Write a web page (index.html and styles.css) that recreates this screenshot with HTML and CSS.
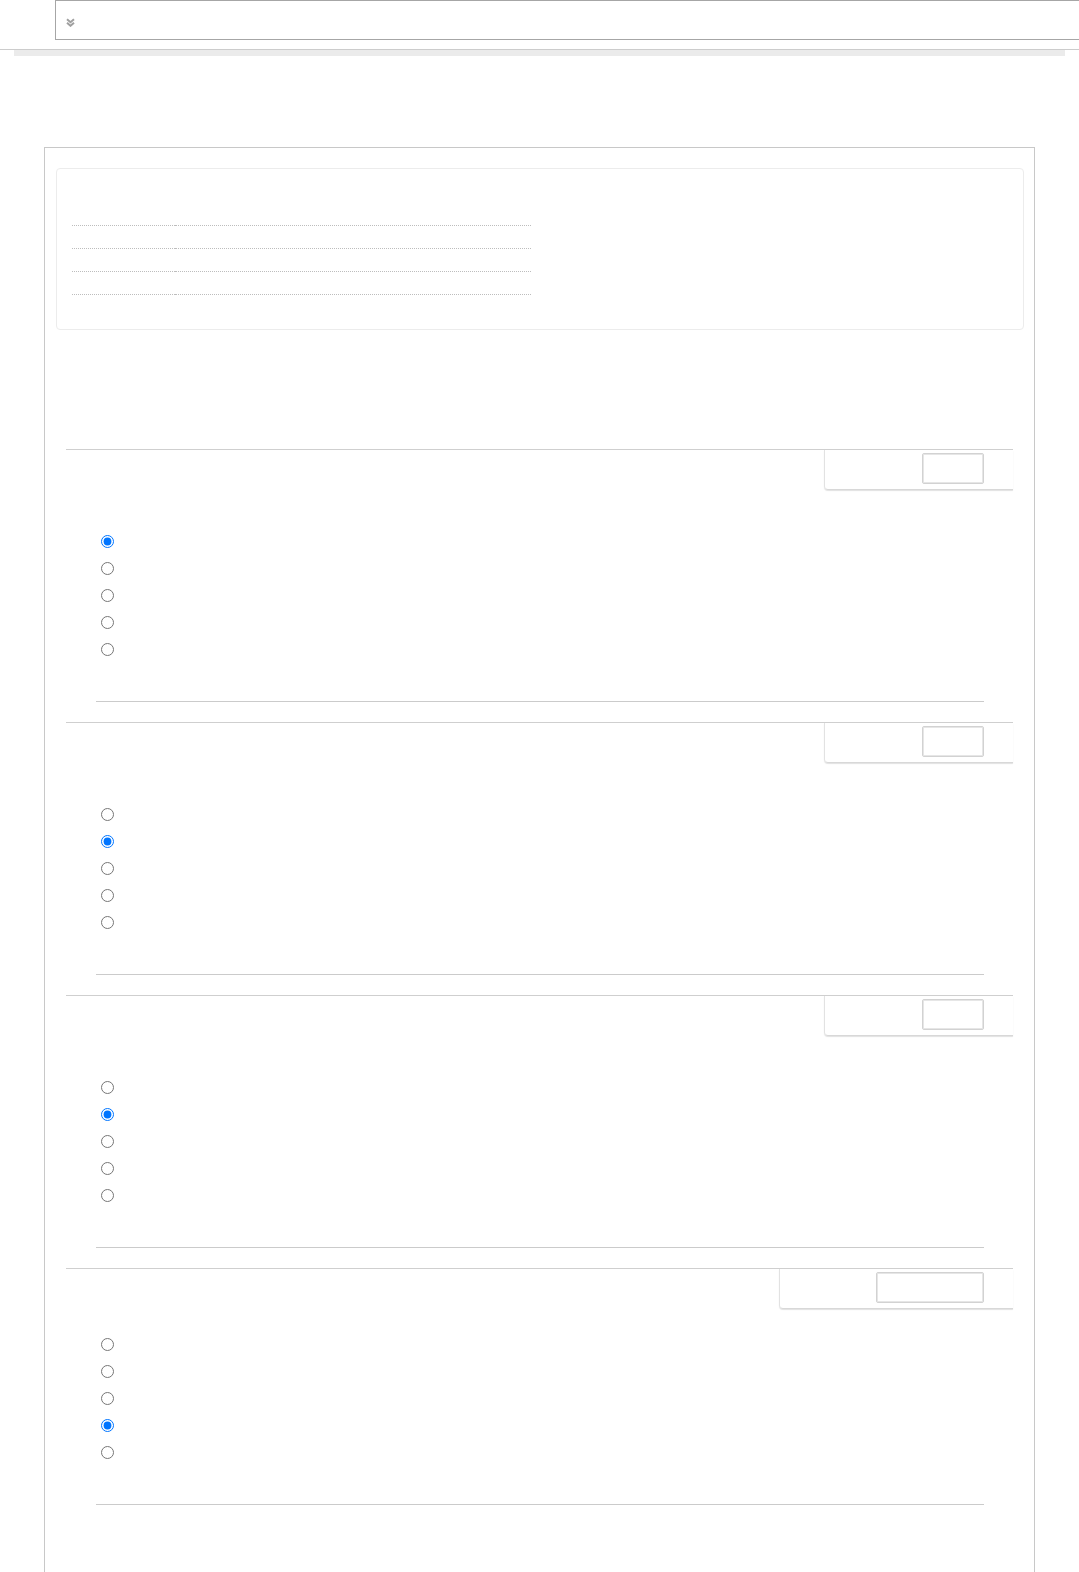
FILE: index.html
```html
<!DOCTYPE html>
<html lang="en">
<head>
    <meta charset="UTF-8">
    <meta name="viewport" content="width=device-width, initial-scale=1.0">
    <title>Quiz review</title>
    <link rel="stylesheet" href="styles.css">
</head>
<body>
    <header class="topbar">
        <div class="drawer">
            <svg class="drawer-icon" width="9" height="9" viewBox="0 0 9 9">
                <path d="M1 1.2l3.5 3 3.5-3M1 4.8l3.5 3 3.5-3" fill="none" stroke="#a0a0a0" stroke-width="2"/>
            </svg>
        </div>
    </header>
    <hr class="rule">
    <div class="progress"></div>

    <div class="page">
        <div class="summary">
            <div class="summary-table">
                <div class="row"><div class="cell label"></div><div class="cell value"></div></div>
                <div class="row"><div class="cell label"></div><div class="cell value"></div></div>
                <div class="row"><div class="cell label"></div><div class="cell value"></div></div>
                <div class="row"><div class="cell label"></div><div class="cell value"></div></div>
            </div>
        </div>

        <div class="questions">
            <div class="que">
                <div class="que-head">
                    <div class="grade"><input class="mark" type="text"></div>
                </div>
                <div class="answers">
                    <label class="opt"><input type="radio" name="q1" checked></label>
                    <label class="opt"><input type="radio" name="q1"></label>
                    <label class="opt"><input type="radio" name="q1"></label>
                    <label class="opt"><input type="radio" name="q1"></label>
                    <label class="opt"><input type="radio" name="q1"></label>
                </div>
                <hr class="que-end">
            </div>

            <div class="que">
                <div class="que-head">
                    <div class="grade"><input class="mark" type="text"></div>
                </div>
                <div class="answers">
                    <label class="opt"><input type="radio" name="q2"></label>
                    <label class="opt"><input type="radio" name="q2" checked></label>
                    <label class="opt"><input type="radio" name="q2"></label>
                    <label class="opt"><input type="radio" name="q2"></label>
                    <label class="opt"><input type="radio" name="q2"></label>
                </div>
                <hr class="que-end">
            </div>

            <div class="que">
                <div class="que-head">
                    <div class="grade"><input class="mark" type="text"></div>
                </div>
                <div class="answers">
                    <label class="opt"><input type="radio" name="q3"></label>
                    <label class="opt"><input type="radio" name="q3" checked></label>
                    <label class="opt"><input type="radio" name="q3"></label>
                    <label class="opt"><input type="radio" name="q3"></label>
                    <label class="opt"><input type="radio" name="q3"></label>
                </div>
                <hr class="que-end">
            </div>

            <div class="que que-short">
                <div class="que-head">
                    <div class="grade grade-wide"><input class="mark mark-wide" type="text"></div>
                </div>
                <div class="answers">
                    <label class="opt"><input type="radio" name="q4"></label>
                    <label class="opt"><input type="radio" name="q4"></label>
                    <label class="opt"><input type="radio" name="q4"></label>
                    <label class="opt"><input type="radio" name="q4" checked></label>
                    <label class="opt"><input type="radio" name="q4"></label>
                </div>
                <hr class="que-end">
            </div>
        </div>
    </div>
</body>
</html>
```

FILE: styles.css
```css
body {
    margin: 0;
    font-family: "Liberation Sans", Arial, sans-serif;
    font-size: 14px;
    color: #333;
    background: #fff;
}

.topbar {
    padding-left: 55px;
}

.drawer {
    height: 40px;
    border: 1px solid #a6a6a6;
    border-right: none;
    padding: 17px 0 0 10px;
    box-sizing: border-box;
}

.drawer-icon {
    display: block;
}

.rule {
    margin: 9px 0 0;
    border: none;
    border-top: 1px solid #cccccc;
    height: 0;
}

.progress {
    height: 6px;
    margin: 0 14px;
    background-color: #ebebeb;
}

.page {
    margin: 91px 44px 0;
    border: 1px solid #c8c8c8;
    border-bottom: none;
    padding: 20px 0 80px;
}

.summary {
    margin: 0 10px 0 11px;
    border: 1px solid #ececec;
    border-radius: 4px;
    padding: 34px 15px;
}

.summary-table {
    display: flex;
    flex-direction: column;
    width: 459px;
}

.row {
    display: flex;
}

.cell {
    height: 22px;
    border-bottom: 1px dotted #bdbdbd;
}

.label {
    width: 103px;
}

.value {
    flex: 1;
}

.questions {
    margin: 119px 21px 0;
}

.que {
    border-top: 1px solid #cfcfcf;
    margin-bottom: 20px;
}

.que-head {
    display: flex;
    justify-content: flex-end;
}

.grade {
    width: 189px;
    height: 40px;
    box-sizing: border-box;
    border-left: 1px solid #e2e2e2;
    border-bottom: 1px solid #d8d8d8;
    border-bottom-left-radius: 4px;
    box-shadow: 0 1px 1px #e2e2e2;
    display: flex;
    justify-content: flex-end;
    align-items: flex-start;
    padding: 3px 29px 0 0;
}

.grade-wide {
    width: 234px;
}

.mark {
    width: 62px;
    height: 31px;
    box-sizing: border-box;
    margin: 0;
    padding: 0;
    border: 1px solid #d2d2d2;
    border-radius: 2px;
    box-shadow: inset 0 0 0 1px #e6e6e6;
    background: #fff;
}

.mark-wide {
    width: 108px;
}

.answers {
    padding: 38px 0 0 35px;
}

.que-short .answers {
    padding-top: 22px;
}

.opt {
    display: flex;
    align-items: center;
    height: 27px;
}

.opt input {
    margin: 0;
    width: 13px;
    height: 13px;
}

.que-end {
    margin: 38px 29px 0 30px;
    border: none;
    border-top: 1px solid #cbcbcb;
    height: 0;
}
```
